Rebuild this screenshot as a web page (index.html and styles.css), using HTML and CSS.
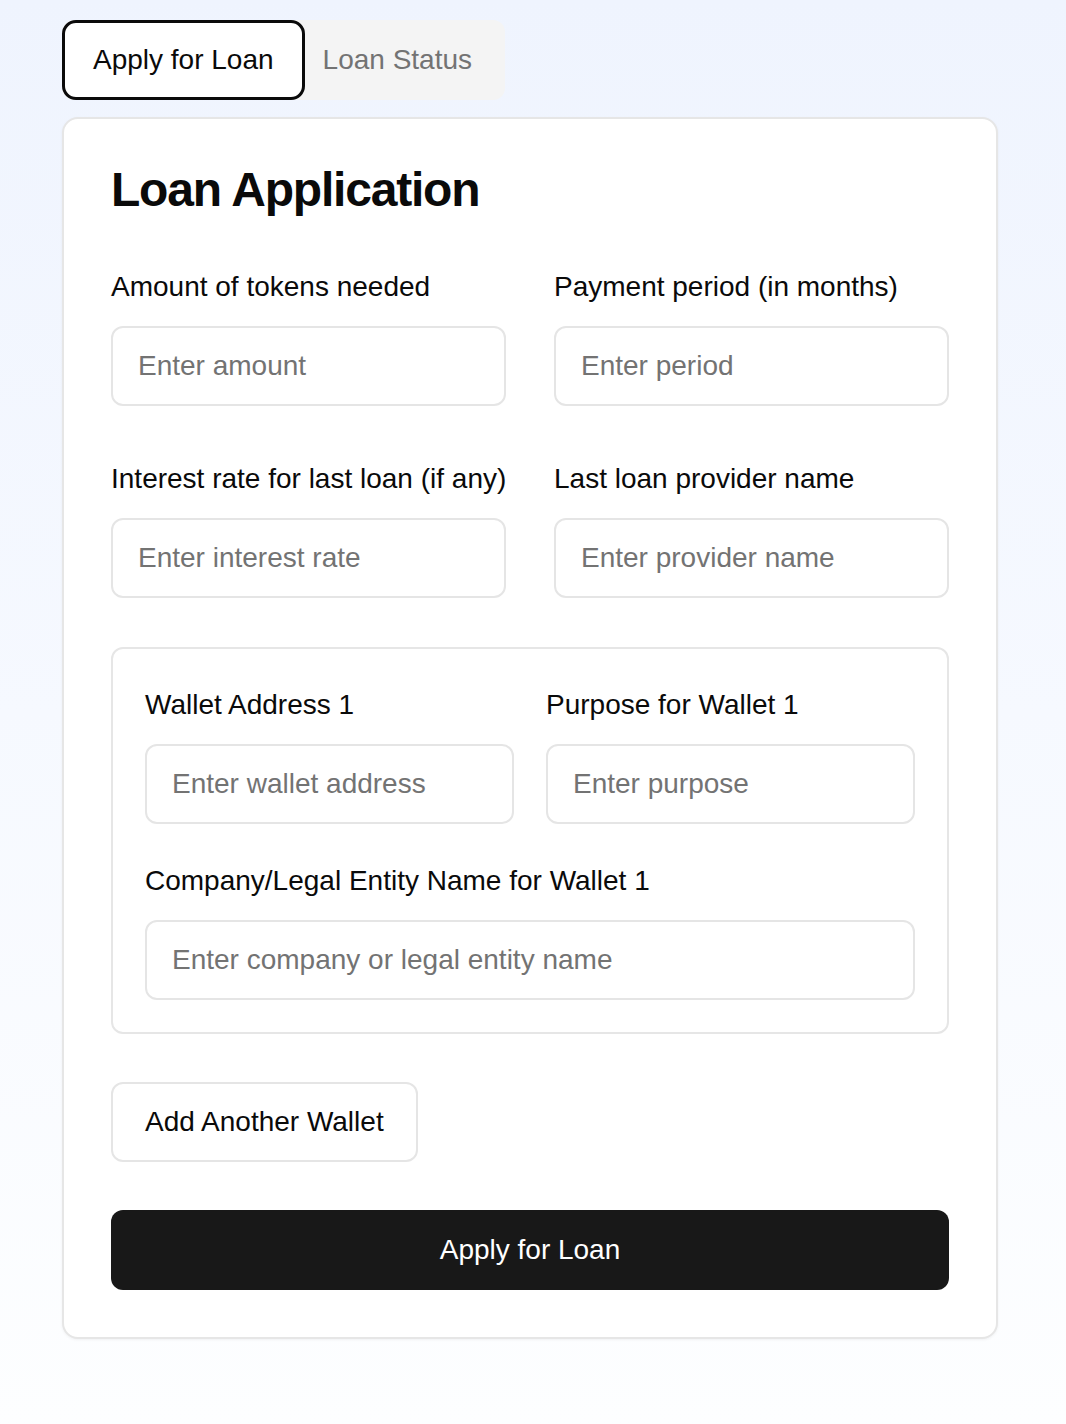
FILE: index.html
```html
<!DOCTYPE html>
<html lang="en">
<head>
<meta charset="utf-8">
<title>Loan Application</title>
<link rel="stylesheet" href="styles.css">
</head>
<body>
<div class="page">
  <div class="tabs">
    <button class="tab tab-active" type="button">Apply for Loan</button>
    <button class="tab tab-idle" type="button">Loan Status</button>
  </div>
  <div class="card">
    <h1 class="title">Loan Application</h1>
    <form class="form">
      <div class="grid">
        <div class="field">
          <label class="label">Amount of tokens needed</label>
          <input class="input" type="text" placeholder="Enter amount">
        </div>
        <div class="field">
          <label class="label">Payment period (in months)</label>
          <input class="input" type="text" placeholder="Enter period">
        </div>
        <div class="field">
          <label class="label">Interest rate for last loan (if any)</label>
          <input class="input" type="text" placeholder="Enter interest rate">
        </div>
        <div class="field">
          <label class="label">Last loan provider name</label>
          <input class="input" type="text" placeholder="Enter provider name">
        </div>
      </div>
      <div class="wallet">
        <div class="wallet-grid">
          <div class="field">
            <label class="label">Wallet Address 1</label>
            <input class="input" type="text" placeholder="Enter wallet address">
          </div>
          <div class="field">
            <label class="label">Purpose for Wallet 1</label>
            <input class="input" type="text" placeholder="Enter purpose">
          </div>
          <div class="field field-wide">
            <label class="label">Company/Legal Entity Name for Wallet 1</label>
            <input class="input" type="text" placeholder="Enter company or legal entity name">
          </div>
        </div>
      </div>
      <div class="actions">
        <button class="btn-outline" type="button">Add Another Wallet</button>
      </div>
      <button class="btn-primary" type="button">Apply for Loan</button>
    </form>
  </div>
</div>
</body>
</html>
```
FILE: styles.css
```css
* {
  box-sizing: border-box;
}

html, body {
  margin: 0;
  padding: 0;
}

body {
  min-height: 1424px;
  background: linear-gradient(to bottom, #eff4fe 0%, #f6f9ff 50%, #fdfeff 100%);
  font-family: "Liberation Sans", Arial, sans-serif;
  font-size: 28px;
  line-height: 42px;
  color: #0a0a0a;
}

.page {
  width: 936px;
  margin-left: 62px;
  padding-top: 20px;
  padding-bottom: 40px;
}

.tabs {
  display: inline-flex;
  height: 80px;
  background: #f4f4f4;
  border-radius: 12px;
  margin-bottom: 17px;
}

.tab {
  font-family: inherit;
  font-size: 28px;
  line-height: 42px;
  height: 80px;
  background: transparent;
  border: none;
  cursor: pointer;
  white-space: nowrap;
}

.tab-active {
  background: #ffffff;
  border: 3px solid #0a0a0a;
  border-radius: 14px;
  padding: 0 28px;
  color: #0a0a0a;
}

.tab-idle {
  padding: 0 33px 0 18px;
  color: #737373;
}

.card {
  background: #ffffff;
  border: 2px solid #e6e6e6;
  border-radius: 16px;
  padding: 47px;
  box-shadow: 0 1px 3px rgba(0, 0, 0, 0.05);
}

.title {
  margin: 0 0 52px 0;
  font-size: 48px;
  line-height: 48px;
  font-weight: 700;
  letter-spacing: -1.2px;
  color: #0a0a0a;
}

.form {
  display: flex;
  flex-direction: column;
}

.grid {
  display: grid;
  grid-template-columns: 1fr 1fr;
  column-gap: 48px;
  row-gap: 52px;
}

.field {
  display: flex;
  flex-direction: column;
  gap: 18px;
  min-width: 0;
}

.field-wide {
  grid-column: 1 / span 2;
}

.label {
  font-size: 28px;
  line-height: 42px;
  color: #0a0a0a;
  white-space: nowrap;
}

.input {
  height: 80px;
  width: 100%;
  border: 2px solid #e5e5e5;
  border-radius: 12px;
  padding: 0 25px;
  font-family: inherit;
  font-size: 28px;
  color: #0a0a0a;
  background: #ffffff;
  outline: none;
}

.input::placeholder {
  color: #737373;
}

.wallet {
  margin-top: 49px;
  border: 2px solid #e6e6e6;
  border-radius: 12px;
  padding: 35px 32px 32px 32px;
}

.wallet-grid {
  display: grid;
  grid-template-columns: 1fr 1fr;
  column-gap: 32px;
  row-gap: 36px;
}

.actions {
  margin-top: 48px;
  display: flex;
}

.btn-outline {
  height: 80px;
  padding: 0 32px;
  background: #ffffff;
  border: 2px solid #e5e5e5;
  border-radius: 12px;
  font-family: inherit;
  font-size: 28px;
  color: #0a0a0a;
  cursor: pointer;
  white-space: nowrap;
}

.btn-primary {
  margin-top: 48px;
  height: 80px;
  width: 100%;
  background: #181818;
  color: #ffffff;
  border: none;
  border-radius: 12px;
  font-family: inherit;
  font-size: 28px;
  cursor: pointer;
}
```
